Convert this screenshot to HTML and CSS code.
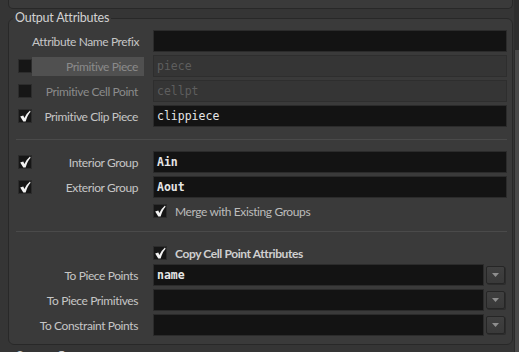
FILE: index.html
```html
<!DOCTYPE html>
<html lang="en">
<head>
    <meta charset="UTF-8">
    <title>Output Attributes</title>
    <link rel="stylesheet" href="styles.css">
</head>
<body>
<div class="window">
    <div class="content">
        <div class="prevBox"></div>
        <fieldset class="group">
            <legend>Output Attributes</legend>

            <div class="row first">
                <span></span>
                <label class="lbl">Attribute Name Prefix</label>
                <div class="field"></div>
            </div>
            <div class="row">
                <span class="box"></span>
                <label class="lbl off">Primitive Piece</label>
                <div class="field off">piece</div>
            </div>
            <div class="row">
                <span class="box"></span>
                <label class="lbl dim">Primitive Cell Point</label>
                <div class="field off">cellpt</div>
            </div>
            <div class="row">
                <span class="box"><svg width="12" height="12" viewBox="0 0 12 12"><path d="M1.2 6.6 L4.3 5.4 L5.4 8 Q7.6 3.4 11 0.6 L11.6 1.8 Q8.6 4.8 6.6 11.6 L4.3 11.6 Z" fill="#f2f2f2"/></svg></span>
                <label class="lbl">Primitive Clip Piece</label>
                <div class="field">clippiece</div>
            </div>

            <div class="sep"></div>

            <div class="row first">
                <span class="box"><svg width="12" height="12" viewBox="0 0 12 12"><path d="M1.2 6.6 L4.3 5.4 L5.4 8 Q7.6 3.4 11 0.6 L11.6 1.8 Q8.6 4.8 6.6 11.6 L4.3 11.6 Z" fill="#f2f2f2"/></svg></span>
                <label class="lbl">Interior Group</label>
                <div class="field bold">Ain</div>
            </div>
            <div class="row">
                <span class="box"><svg width="12" height="12" viewBox="0 0 12 12"><path d="M1.2 6.6 L4.3 5.4 L5.4 8 Q7.6 3.4 11 0.6 L11.6 1.8 Q8.6 4.8 6.6 11.6 L4.3 11.6 Z" fill="#f2f2f2"/></svg></span>
                <label class="lbl">Exterior Group</label>
                <div class="field bold">Aout</div>
            </div>
            <div class="toggle merge">
                <span class="box"><svg width="12" height="12" viewBox="0 0 12 12"><path d="M1.2 6.6 L4.3 5.4 L5.4 8 Q7.6 3.4 11 0.6 L11.6 1.8 Q8.6 4.8 6.6 11.6 L4.3 11.6 Z" fill="#f2f2f2"/></svg></span>
                <span>Merge with Existing Groups</span>
            </div>

            <div class="sep second"></div>

            <div class="toggle strong">
                <span class="box"><svg width="12" height="12" viewBox="0 0 12 12"><path d="M1.2 6.6 L4.3 5.4 L5.4 8 Q7.6 3.4 11 0.6 L11.6 1.8 Q8.6 4.8 6.6 11.6 L4.3 11.6 Z" fill="#f2f2f2"/></svg></span>
                <span>Copy Cell Point Attributes</span>
            </div>
            <div class="row afterToggle">
                <span></span>
                <label class="lbl">To Piece Points</label>
                <div class="menu">
                    <div class="field bold">name</div>
                    <span class="drop"><svg width="7" height="4" viewBox="0 0 7 4"><path d="M0 0 H7 L3.5 4 Z" fill="#8e8e8e"/></svg></span>
                </div>
            </div>
            <div class="row">
                <span></span>
                <label class="lbl">To Piece Primitives</label>
                <div class="menu">
                    <div class="field"></div>
                    <span class="drop"><svg width="7" height="4" viewBox="0 0 7 4"><path d="M0 0 H7 L3.5 4 Z" fill="#8e8e8e"/></svg></span>
                </div>
            </div>
            <div class="row">
                <span></span>
                <label class="lbl">To Constraint Points</label>
                <div class="menu">
                    <div class="field"></div>
                    <span class="drop"><svg width="7" height="4" viewBox="0 0 7 4"><path d="M0 0 H7 L3.5 4 Z" fill="#8e8e8e"/></svg></span>
                </div>
            </div>
        </fieldset>
        <fieldset class="group next">
            <legend>Output Groups</legend>
        </fieldset>
    </div>
    <div class="scrollbar"><div class="thumb"></div></div>
</div>
</body>
</html>
```

FILE: styles.css
```css
body {
    margin: 0;
    background: #353535;
    font-family: Lato, "Liberation Sans", sans-serif;
    font-size: 12px;
    letter-spacing: -0.4px;
    color: #c6c6c6;
}

.window {
    display: flex;
    width: 519px;
    height: 352px;
    overflow: hidden;
}

.content {
    flex: 1;
    padding: 0 1px 0 8px;
}

.scrollbar {
    width: 5px;
    display: flex;
    flex-direction: column;
    background: #2e2e2e;
}
.thumb {
    flex: 1;
    margin-top: 50px;
    background: #494949;
    border-left: 1px solid #2a2a2a;
}

.prevBox {
    height: 8px;
    background: #3a3a3a;
    border: 1px solid #282828;
    border-top: 0;
    border-radius: 0 0 5px 5px;
}

.group {
    margin: 1px 0 0;
    padding: 4px 0 8px;
    min-width: 0;
    background: #3a3a3a;
    border: 1px solid #282828;
    border-radius: 6px;
}
.group legend {
    margin-left: 4px;
    padding: 0 2px;
    font-size: 12.5px;
    line-height: 16px;
    letter-spacing: -0.2px;
    color: #d2d2d2;
}
.group.next {
    margin-top: 4px;
    height: 40px;
}

.row {
    display: grid;
    grid-template-columns: 14px 112px 1fr;
    align-items: center;
    height: 22px;
    margin-top: 3px;
    padding: 0 5px 0 9px;
}
.row.first {
    margin-top: 0;
}
.row.afterToggle {
    margin-top: 2px;
}

.box {
    display: flex;
    align-items: center;
    justify-content: center;
    width: 14px;
    height: 14px;
    box-sizing: border-box;
    border: 1px solid #2c2c2c;
    background: #161616;
}
.box svg {
    display: block;
}

.lbl {
    height: 19px;
    line-height: 19px;
    padding-right: 6px;
    text-align: right;
    white-space: nowrap;
}
.lbl.off {
    background: #505050;
    color: #8b8b8b;
}
.lbl.dim {
    color: #8b8b8b;
}

.field {
    height: 22px;
    box-sizing: border-box;
    margin-left: 9px;
    padding-left: 3px;
    border: 1px solid #2b2b2b;
    background: #131313;
    font-family: "DejaVu Sans Mono", monospace;
    font-size: 11.5px;
    letter-spacing: 0;
    line-height: 20px;
    color: #e6e6e6;
}
.field.off {
    background: #353535;
    border-color: #2e2e2e;
    color: #5e5e5e;
}
.field.bold {
    font-weight: bold;
}

.menu {
    display: flex;
    align-items: center;
    gap: 2px;
    margin-left: 9px;
    padding-right: 2px;
}
.menu .field {
    flex: 1;
    margin-left: 0;
}
.drop {
    display: flex;
    align-items: center;
    justify-content: center;
    width: 19px;
    height: 18px;
    box-sizing: border-box;
    border: 1px solid #262626;
    border-radius: 2px;
    background: linear-gradient(#404040, #393939);
    box-shadow: 1px 1px 0 #2c2c2c;
}
.drop svg {
    display: block;
}

.toggle {
    display: flex;
    align-items: center;
    gap: 8px;
    height: 18px;
    padding-left: 144px;
}
.toggle.merge {
    margin-top: 4px;
    color: #bcbcbc;
}
.toggle.strong {
    font-weight: bold;
    color: #d0d0d0;
}

.sep {
    height: 1px;
    margin: 12px 5px 11px 7px;
    background: #4a4a4a;
}
.sep.second {
    margin: 11px 5px 12px 7px;
}
```
